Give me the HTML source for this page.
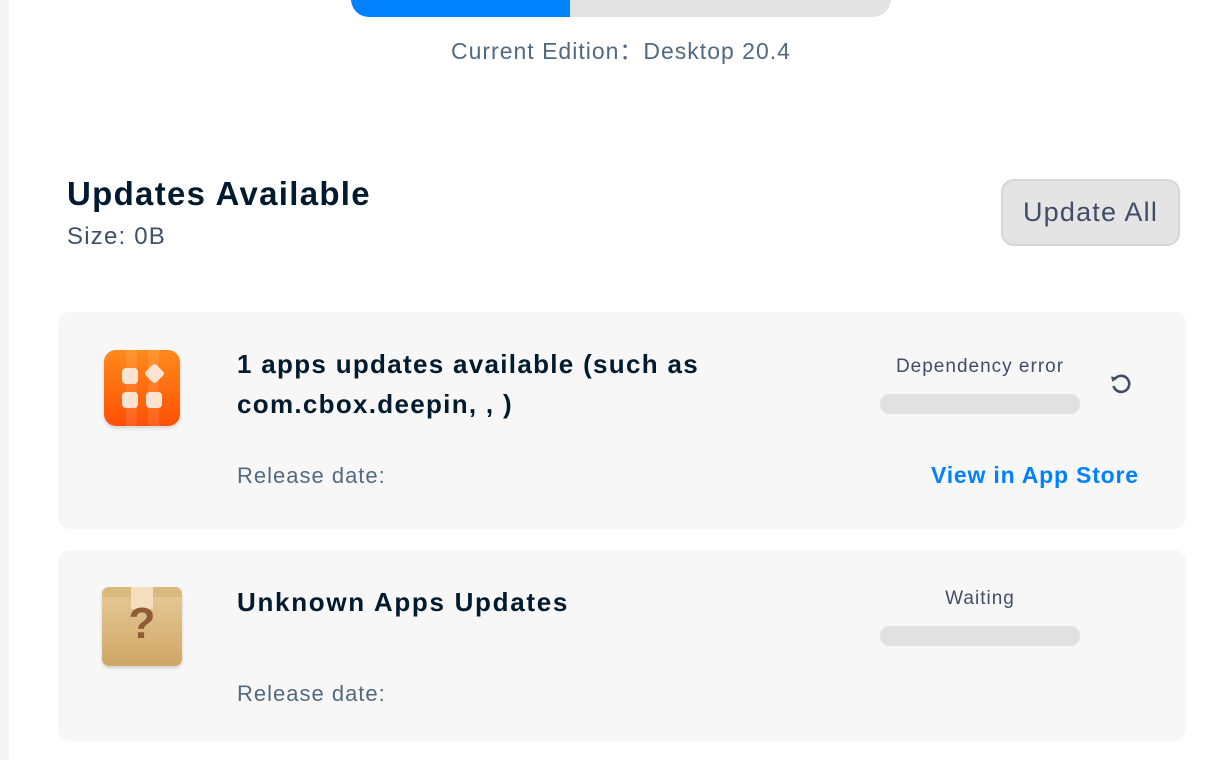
<!DOCTYPE html>
<html><head><meta charset="utf-8"><style>
*{margin:0;padding:0;box-sizing:border-box}
body{width:1226px;height:760px;overflow:hidden;background:#fff;font-family:"Liberation Sans","DejaVu Sans",sans-serif;position:relative}
.abs{position:absolute}
.strip{left:0;top:0;width:9px;height:760px;background:#f5f5f5}
.bar{left:351px;top:-20px;width:540px;height:37px;border-radius:0 0 18px 18px;background:#e3e3e3;overflow:hidden}
.bar div{width:219px;height:100%;background:#0081ff}
.ed{left:451px;top:32px;font-size:23px;color:#526a7f;white-space:nowrap;letter-spacing:1px}
h1{position:absolute;left:67px;top:175px;font-size:33px;font-weight:bold;color:#001a2e;white-space:nowrap;letter-spacing:1.3px}
.size{left:67px;top:223px;font-size:24px;color:#3e5166;letter-spacing:1.2px}
.btn{left:1001px;top:179px;width:179px;height:67px;border:2px solid #d6d6d6;border-radius:13px;background:#e4e4e4;font-size:27px;color:#414d68;text-align:center;line-height:62px;letter-spacing:1.2px}
.card{left:58px;width:1128px;background:#f7f7f7;border-radius:12px}
.t{font-size:26px;font-weight:bold;color:#001a2e;line-height:40px;letter-spacing:1.3px;white-space:nowrap}
.rd{font-size:22px;color:#526a7f;white-space:nowrap;letter-spacing:1px}
.st{font-size:19px;color:#414d68;white-space:nowrap;text-align:center;width:200px;letter-spacing:1px}
.pb{width:200px;height:20px;border-radius:10px;background:#e1e1e1}
.link{font-size:23px;font-weight:bold;color:#0081ff;white-space:nowrap;letter-spacing:0.8px}
</style></head><body>
<div class="abs strip"></div>
<div class="abs bar"><div></div></div>
<div class="abs ed">Current Edition：Desktop 20.4</div>
<h1>Updates Available</h1>
<div class="abs size">Size: 0B</div>
<div class="abs btn">Update All</div>

<div class="abs card" style="top:312px;height:217px"></div>
<div class="abs" style="left:104px;top:350px;width:76px;height:76px;border-radius:12px;background:linear-gradient(#ff8a1a,#ff5005);overflow:hidden;box-shadow:0 2px 3px rgba(0,0,0,.15)">
<div class="abs" style="left:22px;top:0;width:11px;height:76px;background:rgba(255,255,255,.1)"></div>
<div class="abs" style="left:44px;top:0;width:11px;height:76px;background:rgba(255,255,255,.1)"></div>
<div class="abs" style="left:18px;top:18px;width:16px;height:16px;border-radius:4px;background:#fde3d2"></div>
<div class="abs" style="left:43px;top:16px;width:15px;height:15px;border-radius:3px;background:#fde3d2;transform:rotate(45deg)"></div>
<div class="abs" style="left:18px;top:42px;width:16px;height:16px;border-radius:4px;background:#fde3d2"></div>
<div class="abs" style="left:42px;top:42px;width:16px;height:16px;border-radius:4px;background:#fde3d2"></div>
</div>
<div class="abs t" style="left:237px;top:344px">1 apps updates available (such as<br>com.cbox.deepin, , )</div>
<div class="abs rd" style="left:237px;top:463px">Release date:</div>
<div class="abs st" style="left:880px;top:356px">Dependency error</div>
<div class="abs pb" style="left:880px;top:394px"></div>
<svg class="abs" style="left:1108px;top:370px" width="26" height="26" viewBox="0 0 26 26"><path d="M6.5 9.5A8 8 0 1 1 5.5 16" fill="none" stroke="#414d68" stroke-width="2.6"/><path d="M3 6.5L9.5 7.5 4.5 12z" fill="#414d68"/></svg>
<div class="abs link" style="left:931px;top:462px">View in App Store</div>

<div class="abs card" style="top:550px;height:191px"></div>
<div class="abs" style="left:102px;top:587px;width:80px;height:79px;border-radius:7px;background:linear-gradient(#e6cb9a,#cfa766);box-shadow:0 2px 3px rgba(0,0,0,.15);overflow:hidden">
<div class="abs" style="left:0;top:0;width:80px;height:10px;background:#d8b97e"></div>
<div class="abs" style="left:29px;top:0;width:22px;height:22px;background:#f3dfbb"></div>
<div class="abs" style="left:0;top:12px;width:80px;text-align:center;font-size:44px;font-weight:bold;color:#8f5a35">?</div>
</div>
<div class="abs t" style="left:237px;top:582px;letter-spacing:1.7px">Unknown Apps Updates</div>
<div class="abs rd" style="left:237px;top:681px">Release date:</div>
<div class="abs st" style="left:880px;top:588px">Waiting</div>
<div class="abs pb" style="left:880px;top:626px"></div>
</body></html>
